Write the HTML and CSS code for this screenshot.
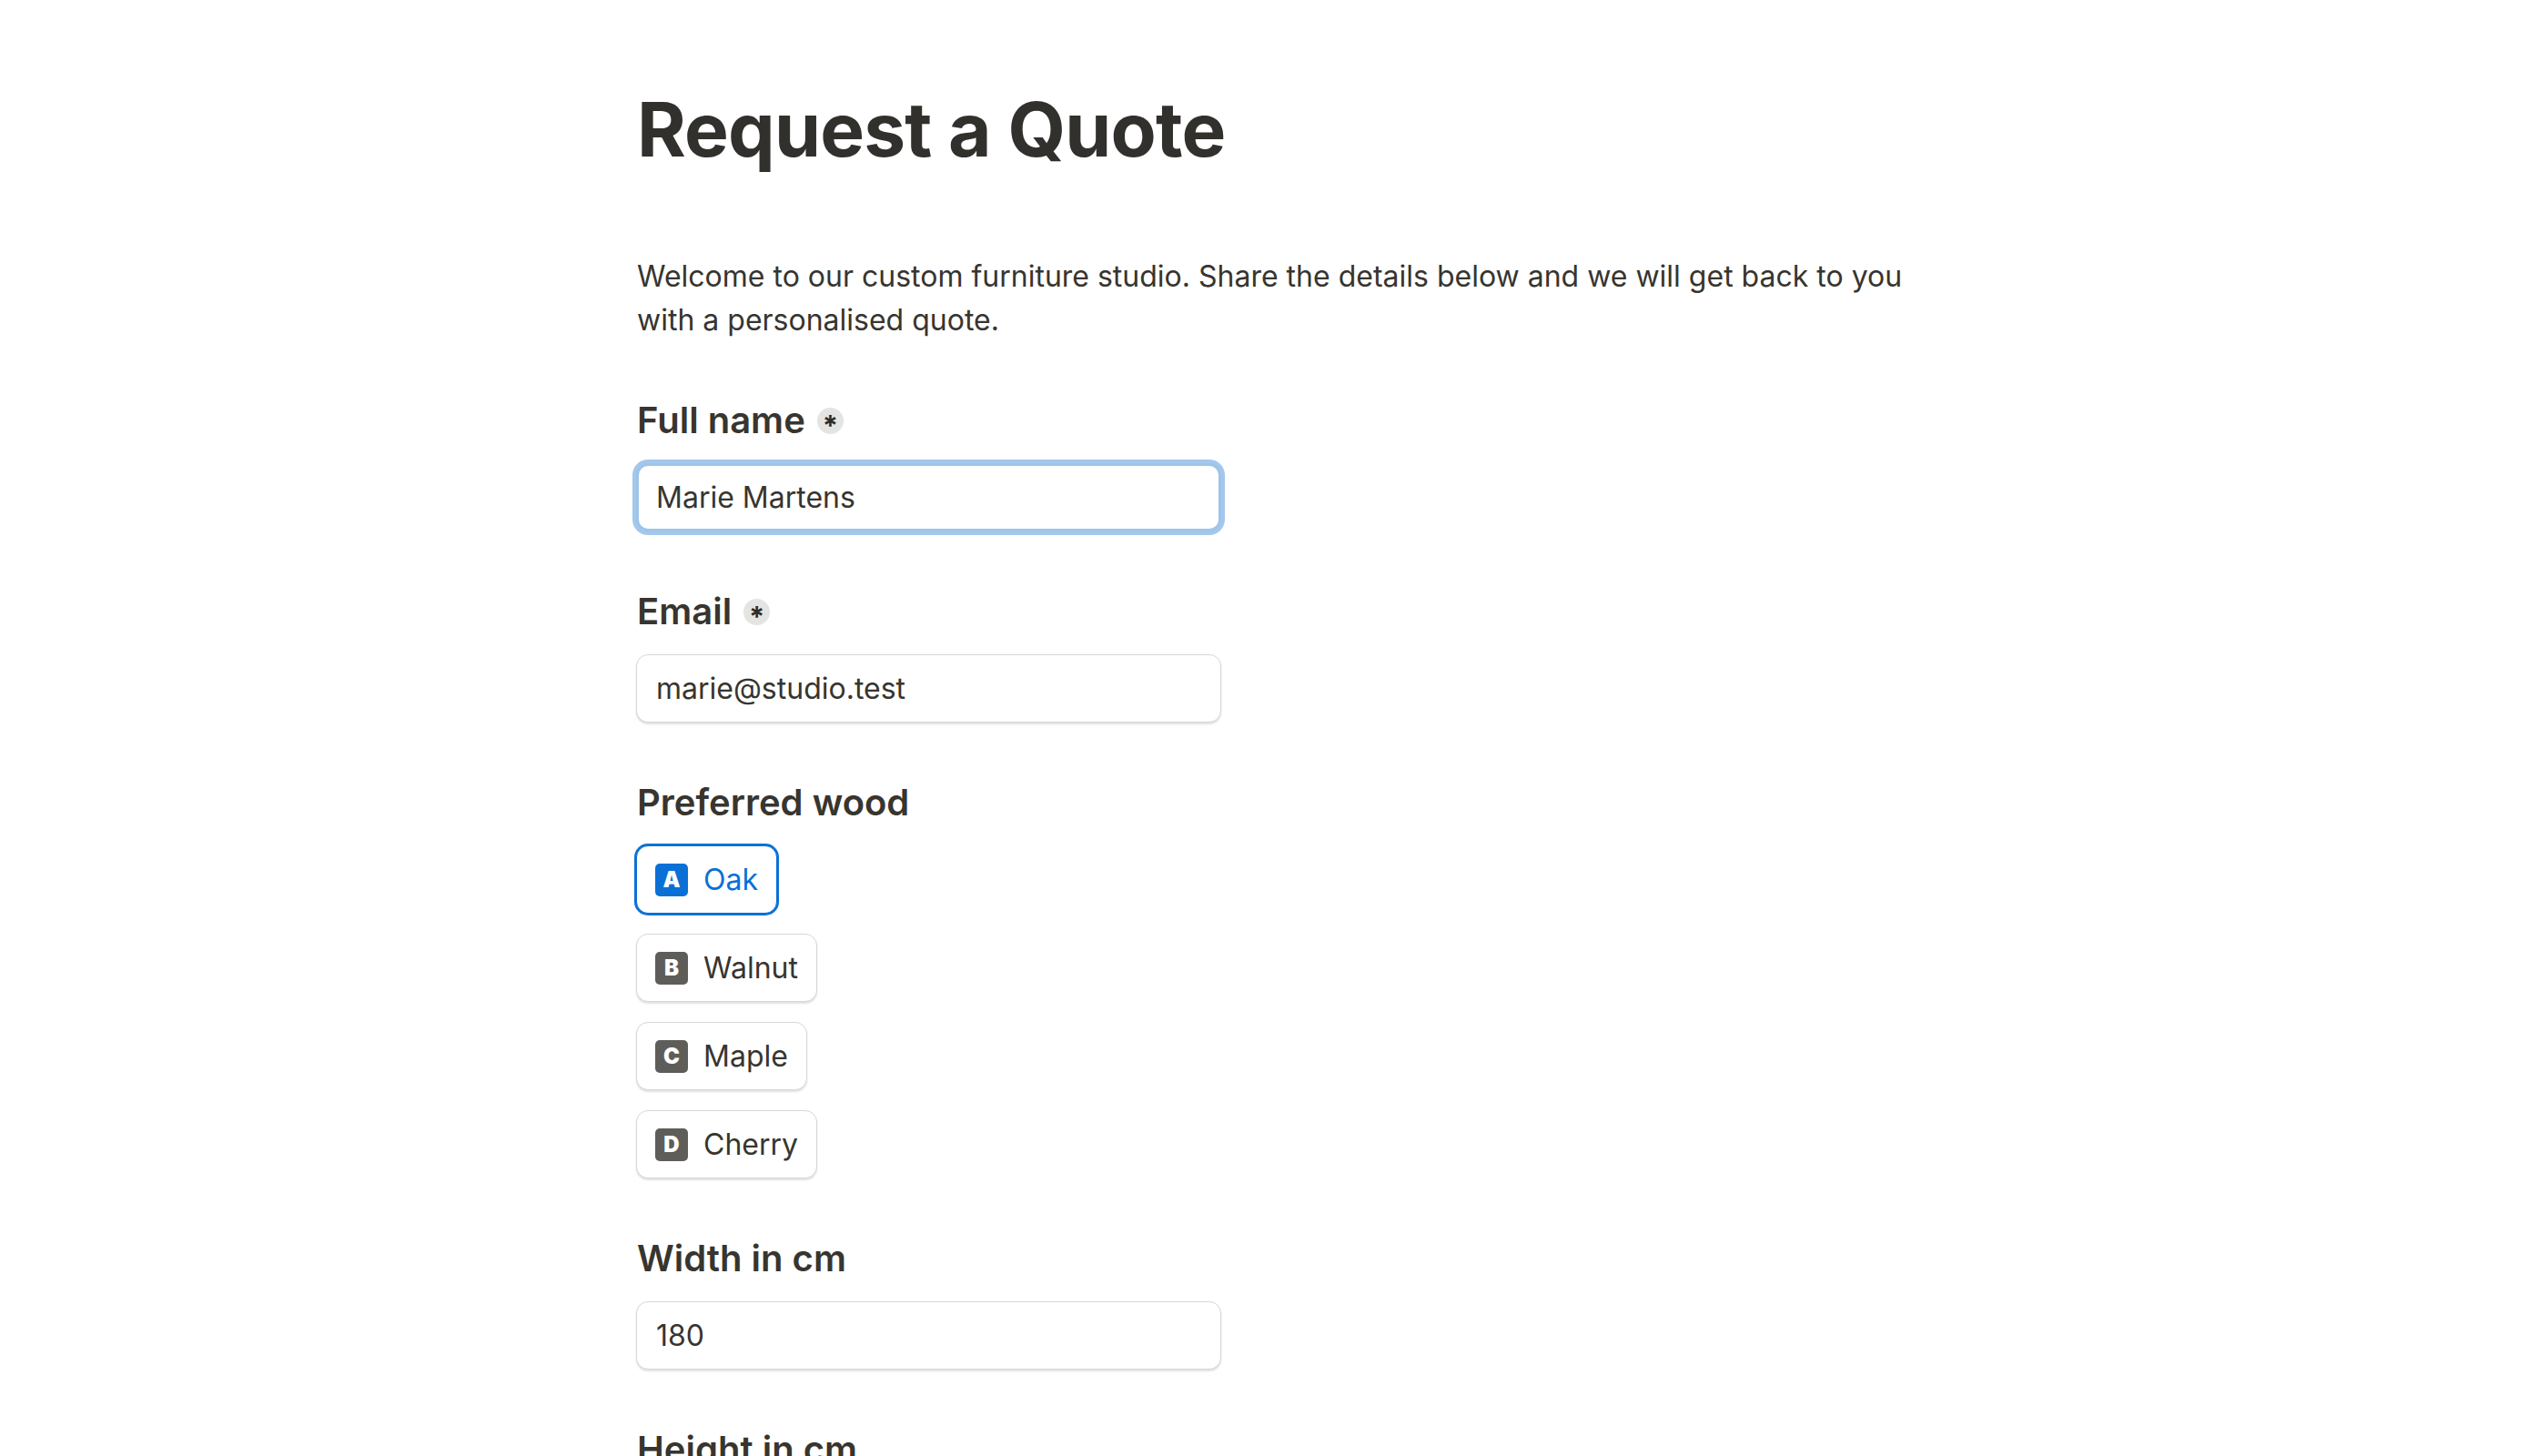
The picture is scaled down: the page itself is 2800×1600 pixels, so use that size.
FILE: index.html
```html
<!DOCTYPE html>
<html lang="en">
<head>
<meta charset="utf-8">
<title>Request a Quote</title>
<link rel="stylesheet" href="styles.css">
</head>
<body>
<main class="page">
  <h1 class="title">Request a Quote</h1>
  <p class="intro">Welcome to our custom furniture studio. Share the details below and we will get back to you with a personalised quote.</p>

  <div class="field">
    <label class="label">Full name <span class="req">*</span></label>
    <div class="input focused">Marie Martens</div>
  </div>

  <div class="field">
    <label class="label">Email <span class="req">*</span></label>
    <div class="input">marie@studio.test</div>
  </div>

  <div class="field">
    <label class="label">Preferred wood</label>
    <div class="options">
      <div class="option selected"><span class="key">A</span><span class="opt-text">Oak</span></div>
      <div class="option"><span class="key">B</span><span class="opt-text">Walnut</span></div>
      <div class="option"><span class="key">C</span><span class="opt-text">Maple</span></div>
      <div class="option"><span class="key">D</span><span class="opt-text">Cherry</span></div>
    </div>
  </div>

  <div class="field">
    <label class="label">Width in cm</label>
    <div class="input">180</div>
  </div>

  <div class="field">
    <label class="label">Height in cm</label>
    <div class="input">90</div>
  </div>
</main>
</body>
</html>
```

FILE: styles.css
```css
html, body {
  margin: 0;
  padding: 0;
  background: #ffffff;
}

body {
  font-family: Inter, "Noto Sans", "Liberation Sans", sans-serif;
  color: #37352f;
}

.page {
  width: 1400px;
  margin: 0 auto;
  padding-top: 94px;
  display: flex;
  flex-direction: column;
}

.title {
  margin: 0;
  font-size: 82px;
  line-height: 1.2;
  font-weight: 700;
  letter-spacing: -0.01em;
  color: #32302c;
}

.intro {
  margin: 88px 0 0;
  font-size: 32px;
  line-height: 48px;
  color: #37352f;
}

.field {
  display: flex;
  flex-direction: column;
  align-items: flex-start;
  gap: 22px;
  margin-top: 61px;
}

.field + .field {
  margin-top: 63px;
}

.label {
  display: flex;
  align-items: center;
  gap: 13px;
  font-size: 40px;
  line-height: 50px;
  font-weight: 600;
  color: #37352f;
}

.req {
  box-sizing: border-box;
  width: 29px;
  height: 29px;
  padding-top: 10px;
  border-radius: 50%;
  background: #e4e4e3;
  color: #2f2d29;
  font-size: 31px;
  font-weight: 700;
  line-height: 20px;
  text-align: center;
}

.input {
  box-sizing: border-box;
  width: 643px;
  height: 75px;
  margin-left: -1px;
  padding: 0 21px;
  display: flex;
  align-items: center;
  border: 1px solid #d8d7d4;
  border-radius: 13px;
  box-shadow: 0 2px 2px rgba(0, 0, 0, 0.12);
  font-size: 32px;
  color: #37352f;
  background: #fff;
}

.input.focused {
  border: 3px solid #9fc4ea;
  box-shadow: 0 0 0 4px #a4c7ec;
  padding: 0 19px;
}

.options {
  display: flex;
  flex-direction: column;
  align-items: flex-start;
  gap: 22px;
}

.option {
  box-sizing: border-box;
  height: 75px;
  margin-left: -1px;
  padding: 0 20px;
  display: flex;
  align-items: center;
  gap: 17px;
  border: 1px solid #d8d7d4;
  border-radius: 13px;
  box-shadow: 0 2px 2px rgba(0, 0, 0, 0.12);
  font-size: 32px;
  color: #37352f;
  background: #fff;
}

.option.selected {
  border: 1px solid #0a70d6;
  box-shadow: 0 0 0 2px #0a70d6;
  color: #0a70d6;
}

.key {
  width: 36px;
  height: 36px;
  border-radius: 5px;
  background: #5f5d59;
  color: #ffffff;
  font-size: 24px;
  font-weight: 900;
  display: flex;
  align-items: center;
  justify-content: center;
}

.option.selected .key {
  background: #0a70d6;
}
```
